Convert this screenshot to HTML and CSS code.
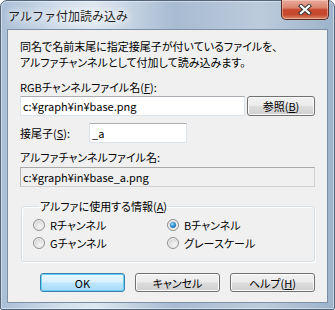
FILE: index.html
```html
<!DOCTYPE html>
<html lang="ja">
<head>
    <meta charset="UTF-8">
    <title>アルファ付加読み込み</title>
    <link rel="stylesheet" href="styles.css">
</head>
<body>
    <div class="window">
        <div class="titlebar">
            <span class="title">アルファ付加読み込み</span>
            <button class="close-btn" type="button" aria-label="閉じる">
                <svg width="14" height="11" viewBox="0 0 14 11">
                    <path d="M3 2 L11 9 M11 2 L3 9" stroke="#3b3b3b" stroke-width="4.2" stroke-linecap="square" fill="none"/>
                    <path d="M3 2 L11 9 M11 2 L3 9" stroke="#ffffff" stroke-width="2.2" stroke-linecap="square" fill="none"/>
                </svg>
            </button>
        </div>

        <div class="client">
            <p class="intro">同名で名前末尾に指定接尾子が付いているファイルを、<br>アルファチャンネルとして付加して読み込みます。</p>

            <div class="label rgb-label">RGBチャンネルファイル名(<u>F</u>):</div>
            <div class="row">
                <div class="textbox path-box">c:¥graph¥in¥base.png</div>
                <button class="btn browse-btn" type="button">参照(<u>B</u>)</button>
            </div>

            <div class="row suffix-row">
                <span class="label suffix-label">接尾子(<u>S</u>):</span>
                <div class="textbox suffix-box">_a</div>
            </div>

            <div class="label alpha-label">アルファチャンネルファイル名:</div>
            <div class="textbox readonly-box">c:¥graph¥in¥base_a.png</div>

            <fieldset class="group">
                <legend>アルファに使用する情報(<u>A</u>)</legend>
                <div class="radio-grid">
                    <label class="radio"><span class="radio-dot"></span>Rチャンネル</label>
                    <label class="radio"><span class="radio-dot checked"></span>Bチャンネル</label>
                    <label class="radio"><span class="radio-dot"></span>Gチャンネル</label>
                    <label class="radio"><span class="radio-dot"></span>グレースケール</label>
                </div>
            </fieldset>

            <div class="actions">
                <button class="btn default-btn" type="button">OK</button>
                <button class="btn" type="button">キャンセル</button>
                <button class="btn" type="button">ヘルプ(<u>H</u>)</button>
            </div>
        </div>
    </div>
</body>
</html>
```

FILE: styles.css
```css
* {
    margin: 0;
    padding: 0;
    box-sizing: border-box;
}

body {
    width: 335px;
    height: 310px;
    background: #ffffff;
    font-family: "Noto Sans CJK JP", "Noto Sans", sans-serif;
    font-size: 11px;
    line-height: 16px;
    color: #000000;
    font-feature-settings: "palt";
    overflow: hidden;
}

u {
    text-decoration: underline;
    text-underline-offset: 1px;
}

/* Window frame */
.window {
    width: 335px;
    height: 310px;
    display: flex;
    flex-direction: column;
    border: 1px solid #53657a;
    border-radius: 7px 7px 2px 2px;
    padding: 0 6px 6px;
    background: linear-gradient(90deg, #a9bed6 0%, #cddbea 16%, #dde7f1 28%, #a7bbd2 52%, #bccbdc 78%, #9db3cb 100%);
    box-shadow: inset 0 0 0 1px rgba(255, 255, 255, 0.45);
}

.titlebar {
    height: 28px;
    display: flex;
    justify-content: space-between;
    align-items: flex-start;
}

.title {
    margin-top: 6px;
    margin-left: 1px;
    font-size: 12px;
    line-height: 17px;
    color: #1e1e1e;
    font-feature-settings: normal;
    text-shadow: 0 0 6px #ffffff, 0 0 10px #ffffff, 0 0 14px #ffffff;
}

.close-btn {
    width: 48px;
    height: 20px;
    margin-top: -1px;
    margin-right: -1px;
    display: flex;
    align-items: center;
    justify-content: center;
    border: 1px solid #5b2a22;
    border-top: none;
    border-radius: 0 0 5px 5px;
    background: linear-gradient(180deg, #e8ab9c 0%, #db8570 40%, #c8462e 52%, #c54a31 78%, #dc8b68 100%);
    box-shadow: inset 0 0 0 1px rgba(255, 220, 210, 0.45);
}

/* Client area */
.client {
    flex: 1;
    display: flex;
    flex-direction: column;
    background: #f0f0f0;
    border: 1px solid #7b8ea4;
    padding: 8px 12px 0;
}

.rgb-label {
    margin-top: 9px;
}

.row {
    display: flex;
    align-items: center;
    margin-top: 1px;
}

.textbox {
    height: 20px;
    padding: 0 2px;
    line-height: 18px;
    background: #ffffff;
    border: 1px solid #dbe3ec;
    border-top-color: #abadb3;
    white-space: nowrap;
}

.path-box {
    width: 225px;
}

.browse-btn {
    width: 68px;
    height: 20px;
    margin-left: 2px;
}

.suffix-row {
    margin-top: 7px;
}

.suffix-label {
    width: 69px;
}

.suffix-box {
    width: 98px;
}

.alpha-label {
    margin-top: 6px;
}

.readonly-box {
    margin-top: 2px;
    background: #f0f0f0;
    border-color: #d0d0d0;
    border-top-color: #a9a9a9;
    border-left-color: #b5b5b5;
}

/* Group box */
.group {
    margin: 11px 0 0 1px;
    padding: 3px 10px 10px 11px;
    border: 1px solid #d5dfe5;
    border-radius: 3px;
    box-shadow: 1px 1px 0 #ffffff inset, 1px 1px 0 #ffffff;
}

.group legend {
    margin-left: 6px;
    padding: 0 1px;
}

.radio-grid {
    display: grid;
    grid-template-columns: 134px 1fr;
    row-gap: 2px;
}

.radio {
    display: flex;
    align-items: center;
    gap: 5px;
}

.radio-dot {
    width: 12px;
    height: 12px;
    border-radius: 50%;
    border: 1px solid #8e8f8f;
    background: radial-gradient(circle at 60% 65%, #f6f6f6 0%, #dcdcdc 55%, #c9c9c9 100%);
    box-shadow: inset 0 0 0 1px #f4f4f4;
    position: relative;
}

.radio-dot.checked::after {
    content: '';
    position: absolute;
    inset: 2px;
    border-radius: 50%;
    background: radial-gradient(circle at 40% 35%, #9be3ff 0%, #2f8fd1 45%, #0b4f8f 100%);
}

/* Buttons */
.btn {
    font-family: inherit;
    font-size: 11px;
    font-feature-settings: "palt";
    color: #000000;
    border: 1px solid #707070;
    border-radius: 3px;
    background: linear-gradient(180deg, #f2f2f2 0%, #ebebeb 48%, #dddddd 52%, #cfcfcf 100%);
    box-shadow: inset 0 0 0 1px #fbfbfb;
    line-height: 14px;
}

.actions {
    display: flex;
    justify-content: flex-end;
    gap: 10px;
    margin-top: 11px;
}

.actions .btn {
    width: 85px;
    height: 19px;
}

.default-btn {
    border-color: #3c7fb1;
    background: linear-gradient(180deg, #eaf6fd 0%, #d9f0fc 48%, #bee6fd 52%, #a7d9f5 100%);
    box-shadow: inset 0 0 0 1px #62d1f6;
}
```
